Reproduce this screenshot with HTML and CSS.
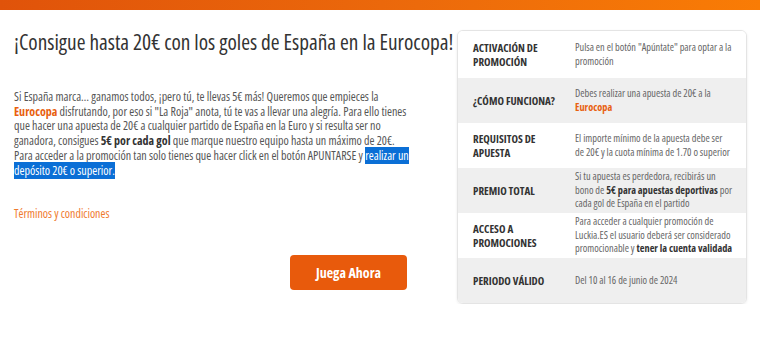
FILE: index.html
```html
<!DOCTYPE html>
<html lang="es">
<head>
<meta charset="utf-8">
<title>Promoción Eurocopa</title>
<link rel="stylesheet" href="styles.css">
</head>
<body>
<div class="topbar"></div>
<main class="main">
  <section class="left">
    <h1 class="title">¡Consigue hasta 20€ con los goles de España en la Eurocopa!</h1>
    <p class="desc">Si España marca… ganamos todos, ¡pero tú, te llevas 5€ más! Queremos que empieces la <a class="hl">Eurocopa</a> disfrutando, por eso si "La Roja" anota, tú te vas a llevar una alegría. Para ello tienes que hacer una apuesta de 20€ a cualquier partido de España en la Euro y si resulta ser no ganadora, consigues <b>5€ por cada gol</b> que marque nuestro equipo hasta un máximo de 20€. Para acceder a la promoción tan solo tienes que hacer click en el botón APUNTARSE y <span class="sel">realizar un depósito 20€ o superior.</span></p>
    <a class="terms">Términos y condiciones</a>
    <div class="btn-wrap"><button class="btn">Juega Ahora</button></div>
  </section>
  <aside class="card">
    <div class="row">
      <div class="label">ACTIVACIÓN DE PROMOCIÓN</div>
      <div class="value">Pulsa en el botón "Apúntate" para optar a la promoción</div>
    </div>
    <div class="row alt">
      <div class="label">¿CÓMO FUNCIONA?</div>
      <div class="value">Debes realizar una apuesta de 20€ a la <a class="hl">Eurocopa</a></div>
    </div>
    <div class="row">
      <div class="label">REQUISITOS DE APUESTA</div>
      <div class="value">El importe mínimo de la apuesta debe ser de 20€ y la cuota mínima de 1.70 o superior</div>
    </div>
    <div class="row alt">
      <div class="label">PREMIO TOTAL</div>
      <div class="value">Si tu apuesta es perdedora, recibirás un bono de <b>5€ para apuestas deportivas</b> por cada gol de España en el partido</div>
    </div>
    <div class="row">
      <div class="label">ACCESO A PROMOCIONES</div>
      <div class="value">Para acceder a cualquier promoción de Luckia.ES el usuario deberá ser considerado promocionable y <b>tener la cuenta validada</b></div>
    </div>
    <div class="row alt">
      <div class="label">PERIODO VÁLIDO</div>
      <div class="value">Del 10 al 16 de junio de 2024</div>
    </div>
  </aside>
</main>
</body>
</html>
```
FILE: styles.css
```css
* { box-sizing: border-box; }
body {
  margin: 0;
  background: #fff;
  font-family: "Open Sans", sans-serif;
  font-stretch: 85%;
  color: #555;
}
.topbar {
  height: 10px;
  background: linear-gradient(90deg, #e0530a 0%, #ec6a0b 55%, #f97c05 100%);
}
.main {
  display: flex;
  align-items: flex-start;
  padding: 20px 0 0 14px;
  gap: 4px;
}
.left {
  width: 439px;
  flex: none;
}
.title {
  margin: 0;
  font-size: 21.3px;
  line-height: 24px;
  font-weight: 400;
  color: #333;
  white-space: nowrap;
}
.desc {
  margin: 36px 0 0;
  font-size: 12px;
  line-height: 14.7px;
  color: #555;
  width: 399px;
}
.desc b { color: #333; }
.hl {
  color: #e8600f;
  font-weight: 700;
}
.sel {
  background: #0b6fd6;
  color: #fff;
}
.terms {
  display: block;
  margin-top: 28px;
  font-size: 11.9px;
  line-height: 15px;
  color: #ef7a2e;
}
.btn-wrap {
  display: flex;
  justify-content: flex-end;
  padding-right: 46px;
  margin-top: 34px;
}
.btn {
  width: 117px;
  height: 35px;
  border: none;
  border-radius: 4px;
  background: #e85a0c;
  color: #fff;
  font-family: inherit;
  font-stretch: 85%;
  font-size: 14px;
  font-weight: 700;
}
.card {
  width: 290px;
  flex: none;
  border: 1px solid #e4e4e4;
  border-radius: 6px;
  overflow: hidden;
  box-shadow: 0 1px 3px rgba(0,0,0,0.08);
}
.row {
  display: grid;
  grid-template-columns: 102px 158px;
  align-items: center;
  height: 45px;
  padding: 0 0 0 15px;
  background: #fff;
}
.row:first-child { height: 47px; }
.row.alt { background: #efefef; }
.label {
  font-size: 11px;
  line-height: 14px;
  font-weight: 700;
  font-stretch: 80%;
  color: #333;
  padding-right: 8px;
}
.value {
  font-size: 10.3px;
  line-height: 13.5px;
  color: #666;
}
.value b { color: #333; }
```
